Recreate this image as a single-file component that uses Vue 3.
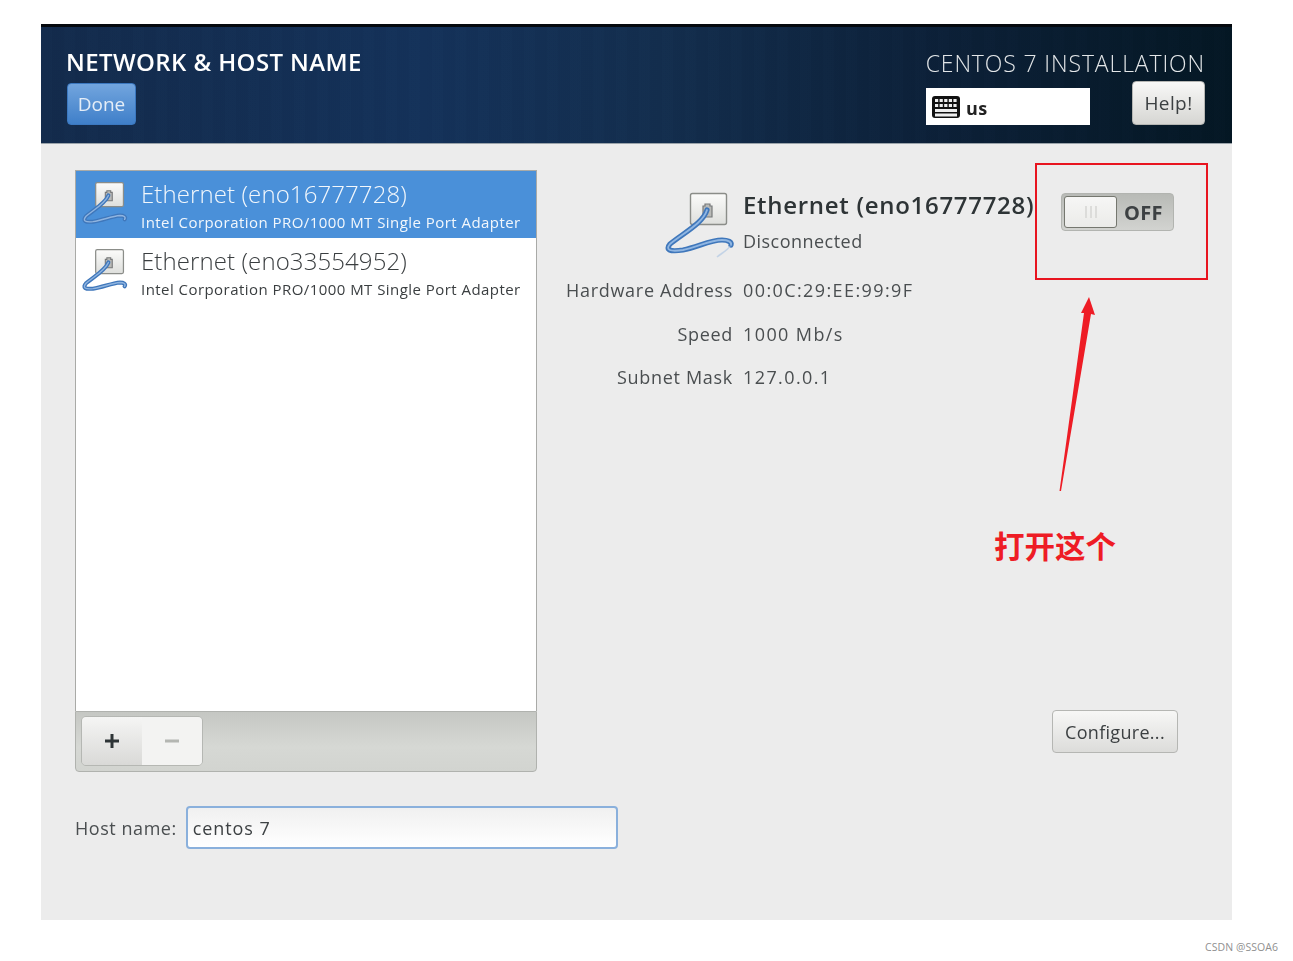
<template>
  <div class="page">
    <div class="window">
      <header class="top-bar">
        <div class="top-left">
          <h1 class="spoke-title">NETWORK &amp; HOST NAME</h1>
          <button class="btn-done">Done</button>
        </div>
        <div class="top-right">
          <div class="distro">CENTOS 7 INSTALLATION</div>
          <div class="top-row">
            <div class="layout-box">
              <svg class="kbd" viewBox="0 0 28 22" width="28" height="22">
                <rect x="0" y="0" width="28" height="22" rx="3" fill="#111" />
                <g fill="#eee">
                  <rect v-for="k in keys" :key="k.x + '-' + k.y" :x="k.x" :y="k.y" :width="k.w" height="3" />
                </g>
              </svg>
              <span>us</span>
            </div>
            <button class="btn-help">Help!</button>
          </div>
        </div>
      </header>

      <main class="content">
        <div class="columns">
          <section class="device-panel">
            <ul class="device-list">
              <li
                v-for="(d, i) in devices"
                :key="d.name"
                class="device"
                :class="{ selected: i === selected }"
                @click="selected = i"
              >
                <svg class="eth-small" viewBox="0 0 70 70"><use href="#eth-icon-small" /></svg>
                <div class="device-text">
                  <div class="device-name">{{ d.name }}</div>
                  <div class="device-desc">Intel Corporation PRO/1000 MT Single Port Adapter</div>
                </div>
              </li>
            </ul>
            <div class="toolbar">
              <div class="btn-group">
                <button class="btn-add">
                  <svg viewBox="0 0 16 16" width="16" height="16"><path d="M8 1v14M1 8h14" stroke="#2e3436" stroke-width="3" /></svg>
                </button>
                <button class="btn-remove">
                  <svg viewBox="0 0 16 16" width="16" height="16"><path d="M1 8h14" stroke="#b4b6b2" stroke-width="3" /></svg>
                </button>
              </div>
            </div>
          </section>

          <section class="detail-panel">
            <div class="detail-head">
              <svg class="eth-large" viewBox="0 0 70 70"><use href="#eth-icon" /></svg>
              <div class="head-text">
                <div class="head-name">Ethernet (eno16777728)</div>
                <div class="head-state">Disconnected</div>
              </div>
              <div class="toggle">
                <div class="knob"><i></i><i></i><i></i></div>
                <span>OFF</span>
              </div>
            </div>
            <dl class="props">
              <template v-for="p in props" :key="p.label">
                <dt>{{ p.label }}</dt>
                <dd>{{ p.value }}</dd>
              </template>
            </dl>
            <button class="btn-configure">Configure...</button>
          </section>
        </div>

        <div class="host-row">
          <label for="host">Host name:</label>
          <input id="host" v-model="hostname" class="host-input" type="text" />
        </div>
      </main>
    </div>
    <div class="watermark">CSDN @SSOA6</div>

    <!-- red annotations drawn over the screenshot -->
    <div class="mark-box"></div>
    <svg class="mark-arrow" viewBox="0 0 40 200" width="40" height="200">
      <polygon points="0.5,196 2,196 32,19 36,20 30,2 22,18 25,18" fill="#ee1c25" />
    </svg>
    <div class="mark-text">打开这个</div>

    <svg width="0" height="0" class="defs">
      <defs>
        <linearGradient id="plate" x1="0" y1="0" x2="0" y2="1">
          <stop offset="0" stop-color="#fbfbfa" />
          <stop offset="1" stop-color="#dedfdc" />
        </linearGradient>
        <symbol id="eth-icon" viewBox="0 0 70 70">
          <rect x="25.5" y="3.5" width="36" height="31" rx="2" fill="url(#plate)" stroke="#8b8d89" stroke-width="1.4" />
          <path d="M38 16h2v-2h5v2h2v11h-9z" fill="#b9bab7" stroke="#77797a" stroke-width="1.2" />
          <path d="M42 20C38 33 20 42 5 54C0 60 5 62 18 60C33 57 45 50 57 50C63 50 67 52 66 55" fill="none" stroke="#3f77bb" stroke-width="5.2" stroke-linecap="round" />
          <path d="M42 20C38 33 20 42 5 54C0 60 5 62 18 60C33 57 45 50 57 50C63 50 67 52 66 55" fill="none" stroke="#90b6e2" stroke-width="1.8" stroke-linecap="round" />
          <path d="M65 56C63 60 57 63 52 67" fill="none" stroke="#a9c3e2" stroke-width="1.6" opacity="0.6" />
        </symbol>
        <symbol id="eth-icon-small" viewBox="0 0 70 70">
          <rect x="25.5" y="3.5" width="36" height="31" rx="2" fill="url(#plate)" stroke="#8b8d89" stroke-width="1.6" />
          <path d="M38 16h2v-2h5v2h2v11h-9z" fill="#b9bab7" stroke="#77797a" stroke-width="1.4" />
          <path d="M42 20C38 30 24 38 13 47C8 53 12 55 22 54C35 52 46 47 57 46C62 46 65 48 63 51" fill="none" stroke="#3f77bb" stroke-width="5.2" stroke-linecap="round" />
          <path d="M42 20C38 30 24 38 13 47C8 53 12 55 22 54C35 52 46 47 57 46C62 46 65 48 63 51" fill="none" stroke="#8fb4df" stroke-width="1.8" stroke-linecap="round" />
        </symbol>
      </defs>
    </svg>
  </div>
</template>

<script setup>
import { ref } from 'vue';

const selected = ref(0);
const hostname = ref('centos 7');

const devices = [
  { name: 'Ethernet (eno16777728)' },
  { name: 'Ethernet (eno33554952)' },
];

const props = [
  { label: 'Hardware Address', value: '00:0C:29:EE:99:9F' },
  { label: 'Speed', value: '1000 Mb/s' },
  { label: 'Subnet Mask', value: '127.0.0.1' },
];

const keys = [];
for (let r = 0; r < 2; r++) {
  for (let c = 0; c < 5; c++) {
    keys.push({ x: 3 + c * 4.6, y: 3 + r * 5, w: 3.2 });
  }
}
keys.push({ x: 3, y: 13, w: 22 });
keys.push({ x: 3, y: 17.5, w: 22 });
</script>

<style>
html,
body {
  margin: 0;
  background: #fff;
}
</style>

<style scoped>
.page {
  position: relative;
  width: 1293px;
  height: 961px;
  overflow: hidden;
  padding: 24px 15px 0 41px;
  box-sizing: border-box;
  background: #fff;
  font-family: "Open Sans", "Noto Sans", sans-serif;
  color: #2e3436;
}

.window {
  width: 1191px;
  height: 896px;
  background: #ececec;
  filter: blur(0.55px);
}

.top-bar {
  height: 120px;
  box-sizing: border-box;
  border-top: 3px solid #05090e;
  padding: 0 27px 0 25px;
  display: flex;
  justify-content: space-between;
  color: #fff;
  background:
    repeating-linear-gradient(90deg, rgba(255, 255, 255, 0.005) 0 11px, rgba(0, 0, 0, 0.015) 11px 23px),
    linear-gradient(90deg, #132b4c 0%, #14325a 32%, #132e4e 52%, #0c2038 76%, #041724 100%);
  border-bottom: 1px solid #9aa3aa;
}

.spoke-title {
  margin: 19px 0 0;
  font-size: 24px;
  line-height: 32px;
  font-weight: 600;
  letter-spacing: 0.4px;
  white-space: nowrap;
}

.btn-done {
  display: block;
  margin: 5px 0 0 1px;
  width: 69px;
  height: 42px;
  padding: 0;
  border: 1px solid #3b78c0;
  border-radius: 4px;
  background: linear-gradient(180deg, #72a5de, #3f7fc9);
  color: #e4edf7;
  font: 400 19px "Open Sans", sans-serif;
}

.top-right {
  display: flex;
  flex-direction: column;
  align-items: flex-end;
}

.distro {
  margin-top: 20px;
  font-size: 23px;
  line-height: 32px;
  font-weight: 300;
  color: #e3e6e8;
  letter-spacing: 0.87px;
  white-space: nowrap;
}

.top-row {
  display: flex;
  align-items: flex-end;
  gap: 42px;
  margin-top: 2px;
}

.layout-box {
  width: 164px;
  height: 37px;
  box-sizing: border-box;
  background: #fff;
  color: #222;
  display: flex;
  align-items: center;
  gap: 6px;
  padding: 0 0 0 6px;
  font-weight: 700;
  font-size: 18px;
}

.layout-box span {
  padding-top: 3px;
  letter-spacing: 0.3px;
}

.btn-help {
  width: 73px;
  height: 44px;
  padding: 0;
  border: 1px solid #b5b6b3;
  border-radius: 4px;
  background: linear-gradient(180deg, #f8f8f7, #d6d6d3);
  color: #3c4042;
  font: 400 19px "Open Sans", sans-serif;
  letter-spacing: 0.4px;
}

.content {
  padding: 26px 0 0 34px;
}

.columns {
  display: flex;
  height: 602px;
}

.device-panel {
  width: 462px;
  display: flex;
  flex-direction: column;
  flex: none;
}

.device-list {
  flex: 1;
  margin: 0;
  padding: 0;
  list-style: none;
  background: #fff;
  border: 1px solid #a9aaa7;
  border-bottom: none;
}

.device {
  height: 67px;
  display: flex;
  align-items: center;
  gap: 10px;
  color: #3a3e40;
}

.device.selected {
  background: #4a90d9;
  color: #f2f7fc;
}

.eth-small {
  width: 54px;
  height: 54px;
  flex: none;
  margin-top: 4px;
}

.device-text {
  margin-top: 3px;
  padding-left: 1px;
}

.device-name {
  font-size: 24px;
  line-height: 32px;
  font-weight: 300;
  letter-spacing: 0.1px;
  white-space: nowrap;
}

.device-desc {
  font-size: 15px;
  line-height: 24px;
  letter-spacing: 0.45px;
  white-space: nowrap;
}

.toolbar {
  height: 61px;
  box-sizing: border-box;
  padding: 4px 5px;
  border: 1px solid #b0b2ae;
  border-radius: 0 0 4px 4px;
  background: linear-gradient(180deg, #c5c7c3, #d6d8d4 60%, #d2d4d0);
}

.btn-group {
  display: flex;
  width: 122px;
  height: 50px;
  box-sizing: border-box;
  border: 1px solid #b5b7b3;
  border-radius: 5px;
  overflow: hidden;
}

.btn-group button {
  flex: 1;
  padding: 0;
  border: none;
  display: flex;
  align-items: center;
  justify-content: center;
}

.btn-add {
  background: linear-gradient(180deg, #f5f5f4, #d9d9d7);
}

.btn-remove {
  background: #f3f3f2;
}

.detail-panel {
  flex: 1;
  display: flex;
  flex-direction: column;
  align-items: flex-start;
  padding-right: 54px;
}

.detail-head {
  display: flex;
  align-items: flex-start;
  margin: 20px 0 0 128px;
}

.eth-large {
  width: 70px;
  height: 70px;
  flex: none;
}

.head-text {
  margin-left: 8px;
  width: 318px;
  flex: none;
}

.head-name {
  font-size: 24px;
  line-height: 32px;
  margin-top: -1px;
  font-weight: 600;
  letter-spacing: 0.7px;
  white-space: nowrap;
}

.head-state {
  margin-top: 8px;
  font-size: 18px;
  line-height: 24px;
  color: #4a4e50;
  letter-spacing: 0.47px;
}

.toggle {
  width: 113px;
  height: 38px;
  margin-top: 3px;
  flex: none;
  box-sizing: border-box;
  border: 1px solid #b2b4b0;
  border-radius: 4px;
  padding: 2px;
  display: flex;
  align-items: center;
  gap: 7px;
  background: linear-gradient(180deg, #b8bab6, #d2d3d0);
  font-size: 20px;
  font-weight: 700;
  letter-spacing: 0.3px;
  color: #3d4143;
}

.knob {
  width: 53px;
  height: 32px;
  box-sizing: border-box;
  border: 1px solid #75776f;
  border-radius: 3px;
  background: linear-gradient(180deg, #f6f6f5, #ebebe9);
  display: flex;
  align-items: center;
  justify-content: center;
  gap: 3px;
}

.knob i {
  width: 2px;
  height: 12px;
  background: #dcdcda;
}

.props {
  margin: 9px 0 0;
  display: grid;
  grid-template-columns: 196px auto;
  column-gap: 10px;
  row-gap: 0;
  font-size: 18px;
  line-height: 43.5px;
  color: #4a4e50;
}

.props dt {
  text-align: right;
  white-space: nowrap;
  letter-spacing: 0.7px;
}

.props dd {
  margin: 0;
  white-space: nowrap;
  letter-spacing: 1.4px;
}

.btn-configure {
  margin-top: auto;
  margin-bottom: 19px;
  align-self: flex-end;
  width: 126px;
  height: 43px;
  padding: 0;
  border: 1px solid #b5b6b3;
  border-radius: 4px;
  background: linear-gradient(180deg, #f7f7f6, #dcdcda);
  color: #3c4042;
  font: 400 18px "Open Sans", sans-serif;
  letter-spacing: 0.3px;
}

.host-row {
  margin-top: 34px;
  display: flex;
  align-items: center;
  gap: 9px;
  font-size: 18px;
  letter-spacing: 0.55px;
  color: #4a4e50;
}

.host-input {
  width: 432px;
  height: 43px;
  box-sizing: border-box;
  padding: 0 5px;
  border: 2px solid #8ab0dc;
  border-radius: 4px;
  background: linear-gradient(180deg, #f0f0f0, #fff);
  color: #3d4143;
  font: 400 18px "Open Sans", sans-serif;
  letter-spacing: 0.9px;
  outline: none;
}

.watermark {
  margin-top: 21px;
  text-align: right;
  font-size: 10.5px;
  line-height: 12px;
  letter-spacing: 0.05px;
  color: #8f8f8f;
}

.mark-box {
  position: absolute;
  left: 1035px;
  top: 163px;
  width: 173px;
  height: 117px;
  box-sizing: border-box;
  border: 2.5px solid #e8141f;
}

.mark-arrow {
  position: absolute;
  left: 1059px;
  top: 295px;
}

.mark-text {
  position: absolute;
  left: 994px;
  top: 524px;
  font: 700 30.5px/42px "Noto Sans CJK SC", sans-serif;
  color: #ee1c25;
}

.defs {
  position: absolute;
}
</style>
